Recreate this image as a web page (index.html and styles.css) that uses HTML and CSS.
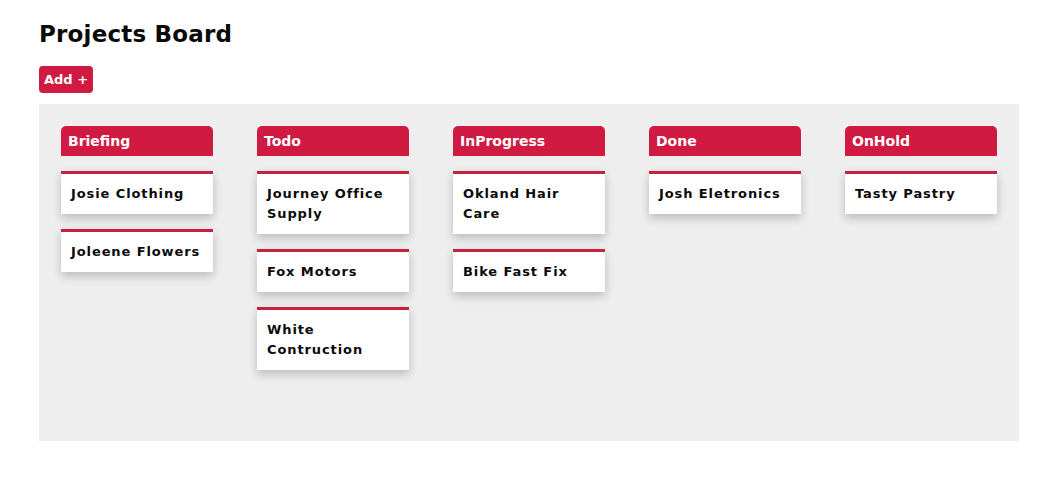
FILE: index.html
```html
<!DOCTYPE html>
<html>
<head>
<meta charset="utf-8">
<link rel="stylesheet" href="styles.css">
</head>
<body>
<div class="page">
  <h1 class="title">Projects Board</h1>
  <button class="add-btn">Add +</button>
  <div class="board">
    <div class="column">
      <div class="col-head">Briefing</div>
      <div class="card">Josie Clothing</div>
      <div class="card">Joleene Flowers</div>
    </div>
    <div class="column">
      <div class="col-head">Todo</div>
      <div class="card">Journey Office Supply</div>
      <div class="card">Fox Motors</div>
      <div class="card">White Contruction</div>
    </div>
    <div class="column">
      <div class="col-head">InProgress</div>
      <div class="card">Okland Hair Care</div>
      <div class="card">Bike Fast Fix</div>
    </div>
    <div class="column">
      <div class="col-head">Done</div>
      <div class="card">Josh Eletronics</div>
    </div>
    <div class="column">
      <div class="col-head">OnHold</div>
      <div class="card">Tasty Pastry</div>
    </div>
  </div>
</div>
</body>
</html>
```

FILE: styles.css
```css
* { box-sizing: border-box; }
html, body { margin: 0; padding: 0; background: #ffffff; }
body { font-family: "DejaVu Sans", "Open Sans", sans-serif; color: #0a0a0a; }
.page { padding: 18px 43px 0 39px; }
.title {
  margin: 0;
  font-size: 23px;
  font-weight: 700;
  letter-spacing: 0.2px;
  line-height: 32px;
  color: #0a0a0a;
}
.add-btn {
  margin-top: 16px;
  height: 27px;
  padding: 0 5px;
  border: none;
  border-radius: 4px;
  background: #d11a42;
  color: #fff;
  font-family: inherit;
  font-size: 13px;
  font-weight: 700;
  letter-spacing: 0;
  display: block;
}
.board {
  margin-top: 11px;
  width: 980px;
  height: 337px;
  background: #eeeeee;
  padding: 22px;
  display: flex;
  gap: 44px;
  align-items: flex-start;
}
.column {
  width: 152px;
  display: flex;
  flex-direction: column;
  gap: 15px;
}
.col-head {
  height: 30px;
  background: #d11a42;
  color: #fff;
  border-radius: 5px 5px 0 0;
  padding: 0 7px;
  font-size: 14px;
  font-weight: 700;
  line-height: 30px;
}
.card {
  background: #fff;
  border-top: 3px solid #c8203f;
  padding: 10px 10px;
  font-size: 13px;
  font-weight: 600;
  letter-spacing: 0.9px;
  line-height: 20px;
  color: #0a0a0a;
  box-shadow: 0 4px 9px rgba(0,0,0,0.22);
}
```
